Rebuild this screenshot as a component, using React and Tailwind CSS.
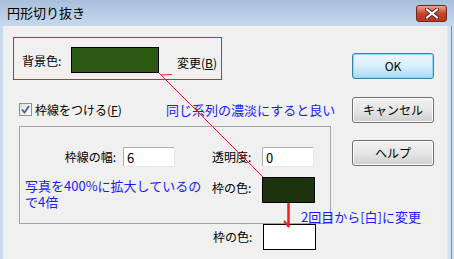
import React from 'react';

const font = { fontFamily: '"Noto Sans CJK JP", "Liberation Sans", sans-serif' };

const Btn = ({ children, focused }) => (
  <div
    className={`w-[82px] h-[26px] rounded-[3px] border flex items-center justify-center text-[12px] text-black ${
      focused
        ? 'border-[#3c7fb1] bg-gradient-to-b from-[#eaf6fd] via-[#d9f0fc] to-[#a7d9f5] shadow-[0_0_0_1px_#8fd6f7_inset]'
        : 'border-[#707070] bg-gradient-to-b from-[#f2f2f2] via-[#e6e6e6] to-[#cfcfcf] shadow-[0_0_0_1px_#fcfcfc_inset]'
    }`}
  >
    {children}
  </div>
);

const Field = ({ value }) => (
  <div className="w-[52px] h-[20px] bg-white border border-[#abadb3] border-r-[#e3e9ef] border-b-[#e3e9ef] rounded-[2px] flex items-center pl-[3px] text-[13px] text-black leading-none">
    {value}
  </div>
);

export default function App() {
  return (
    <div className="relative w-[454px] h-[259px] overflow-hidden bg-[#c6d7ea] flex flex-col" style={font}>
      {/* title bar */}
      <div className="shrink-0 h-[26px] flex items-start justify-between bg-gradient-to-b from-[#a7bfdb] to-[#c6d9ed] pr-[7px]">
        <span className="pl-[7px] pt-[4px] text-[13px] leading-[18px] text-black">円形切り抜き</span>
        <div className="mt-[5px] w-[31px] h-[17px] rounded-[3px] border border-[#6d2a24] bg-gradient-to-b from-[#e8a48f] via-[#c9432a] to-[#b8341c] flex items-center justify-center">
          <svg width="14" height="11" viewBox="0 0 14 11">
            <path d="M2 1.5 L12 9.5 M12 1.5 L2 9.5" stroke="#4a2a28" strokeWidth="4" strokeLinecap="round" />
            <path d="M2 1.5 L12 9.5 M12 1.5 L2 9.5" stroke="#ffffff" strokeWidth="2.2" strokeLinecap="round" />
          </svg>
        </div>
      </div>

      <div className="flex flex-1 min-h-0">
        <div className="w-[3px] bg-[#c9d9ec]" />
        {/* dialog body */}
        <div className="w-[444px] bg-[#f0f0f0] flex text-[12px] text-black">
          <div className="w-[339px] ml-[10px] flex flex-col">
            {/* background colour */}
            <div className="shrink-0 mt-[11px] w-[209px] h-[43px] border border-[#ee1c25] flex items-start">
              <span className="shrink-0 w-[57px] pl-[8px] mt-[15px] leading-[16px]">背景色:</span>
              <div className="shrink-0 mt-[9px] w-[88px] h-[26px] border border-black bg-[#2d5a13]" />
              <span className="ml-[18px] mt-[17px] leading-[16px]">変更(<span className="underline">B</span>)</span>
            </div>

            {/* checkbox row */}
            <div className="shrink-0 mt-[23px] h-[13px] flex items-center">
              <div className="ml-[6px] w-[13px] h-[13px] border border-[#8f8f8f] bg-gradient-to-br from-[#dcdcdc] to-[#ffffff] flex items-center justify-center">
                <svg width="9" height="9" viewBox="0 0 9 9">
                  <path d="M1 4.5 L3.5 7.5 L8 1" stroke="#4a5f97" strokeWidth="1.8" fill="none" />
                </svg>
              </div>
              <span className="ml-[3px] w-[131px] leading-[16px]">枠線をつける(<span className="underline">F</span>)</span>
              <span className="text-[13px] leading-[16px] text-[#1a1aff] whitespace-nowrap">同じ系列の濃淡にすると良い</span>
            </div>

            {/* group */}
            <div className="shrink-0 ml-[6px] mt-[10px] w-[312px] h-[98px] border border-[#a5a5a5] flex flex-col">
              <div className="mt-[20px] h-[20px] flex items-center">
                <span className="w-[96px] text-right leading-[16px]">枠線の幅:</span>
                <div className="ml-[7px]">
                  <Field value="6" />
                </div>
                <span className="ml-[37px] w-[50px] leading-[16px]">透明度:</span>
                <Field value="0" />
              </div>
              <div className="mt-[10px] flex items-start">
                <div className="w-[192px] pl-[5px] mt-[1px] text-[13px] leading-[16px] text-[#1a1aff] flex flex-col">
                  <span className="whitespace-nowrap">写真を400%に拡大しているの</span>
                  <span>で4倍</span>
                </div>
                <span className="w-[50px] mt-[3px] leading-[16px]">枠の色:</span>
                <div className="w-[53px] h-[26px] border border-black bg-[#1d330d]" />
              </div>
            </div>

            {/* second frame colour */}
            <div className="shrink-0 ml-[200px] h-[26px] flex items-center">
              <span className="w-[50px] leading-[16px]">枠の色:</span>
              <div className="w-[53px] h-[26px] border border-black bg-white" />
            </div>
          </div>

          {/* buttons */}
          <div className="flex flex-col">
            <div className="mt-[27px]">
              <Btn focused>OK</Btn>
            </div>
            <div className="mt-[18px]">
              <Btn>キャンセル</Btn>
            </div>
            <div className="mt-[17px]">
              <Btn>ヘルプ</Btn>
            </div>
          </div>
        </div>
        <div className="w-[7px] bg-[#d3e0ee] border-l border-[#dfe8f2] flex">
          <div className="ml-[3px] w-[1px] bg-[#3ba3dc]" />
        </div>
      </div>

      {/* annotation marks */}
      <svg className="absolute inset-0 pointer-events-none" width="454" height="259">
        <line x1="159" y1="73" x2="263" y2="177" stroke="#e0202a" strokeWidth="1" />
        <line x1="161" y1="75" x2="172" y2="74.5" stroke="#e0202a" strokeWidth="1" />
        <line x1="288.5" y1="203" x2="288.5" y2="227" stroke="#ec1c24" strokeWidth="2.5" />
        <line x1="284" y1="221" x2="289" y2="227" stroke="#ec1c24" strokeWidth="2" />
      </svg>
      <span className="absolute left-[301px] top-[209px] text-[13px] leading-[16px] text-[#1a1aff]">2回目から[白]に変更</span>
    </div>
  );
}
